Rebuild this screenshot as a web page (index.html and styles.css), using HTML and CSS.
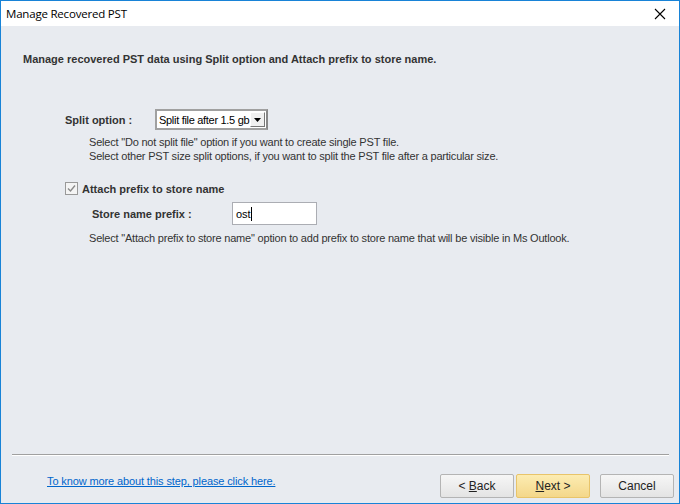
FILE: index.html
```html
<!DOCTYPE html>
<html lang="en">
<head>
    <meta charset="UTF-8">
    <title>Manage Recovered PST</title>
    <link rel="stylesheet" href="styles.css">
</head>
<body>
    <div class="window">
        <div class="title-bar">
            <span class="title">Manage Recovered PST</span>
            <span class="close">
                <svg width="12" height="12" viewBox="0 0 12 12"><path d="M1 1 L11 11 M11 1 L1 11" stroke="#000" stroke-width="1.1"/></svg>
            </span>
        </div>

        <div class="content">
            <h1 class="heading">Manage recovered PST data using Split option and Attach prefix to store name.</h1>

            <div class="split-row">
                <span class="label">Split option :</span>
                <div class="combo">
                    <span class="combo-text">Split file after 1.5 gb</span>
                    <span class="combo-btn">
                        <svg width="7" height="4" viewBox="0 0 7 4"><path d="M0 0 H7 L3.5 4 Z" fill="#000"/></svg>
                    </span>
                </div>
            </div>
            <p class="hint split-hint">Select "Do not split file" option if you want to create single PST file.<br>Select other PST size split options, if you want to split the PST file after a particular size.</p>

            <div class="check-row">
                <span class="checkbox">
                    <svg width="9" height="9" viewBox="0 0 9 9"><path d="M1 4.5 L3.5 7 L8 1.5" stroke="#8a8a8a" stroke-width="1.4" fill="none"/></svg>
                </span>
                <span class="label">Attach prefix to store name</span>
            </div>
            <div class="prefix-row">
                <span class="label">Store name prefix :</span>
                <div class="text-input">ost<span class="caret"></span></div>
            </div>
            <p class="hint prefix-hint">Select "Attach prefix to store name" option to add prefix to store name that will be visible in Ms Outlook.</p>
        </div>

        <div class="footer">
            <div class="separator"></div>
            <div class="footer-row">
                <a class="help-link" href="#">To know more about this step, please click here.</a>
                <div class="buttons">
                    <button class="btn">&lt; <u>B</u>ack</button>
                    <button class="btn btn-next"><u>N</u>ext &gt;</button>
                    <button class="btn btn-cancel">Cancel</button>
                </div>
            </div>
        </div>
    </div>
</body>
</html>
```

FILE: styles.css
```css
/* General Styles */
body {
    margin: 0;
    font-family: 'Liberation Sans', Arial, sans-serif;
    font-size: 11px;
    color: #333;
}

.window {
    width: 680px;
    height: 504px;
    box-sizing: border-box;
    border: 1px solid #1883d7;
    background-color: #e8ebf0;
    display: flex;
    flex-direction: column;
}

/* Title Bar */
.title-bar {
    height: 25px;
    background-color: #fff;
    display: flex;
    align-items: center;
    justify-content: space-between;
    padding: 0 13px 0 5px;
}

.title {
    font-family: 'Open Sans', 'Noto Sans', sans-serif;
    font-size: 11.5px;
    letter-spacing: -0.2px;
    color: #000;
}

.close {
    display: flex;
}

/* Content */
.content {
    flex: 1;
    padding: 27px 0 0 22px;
}

.heading {
    margin: 0;
    font-size: 11px;
    font-weight: bold;
    color: #333;
}

.label {
    font-weight: bold;
    color: #333;
}

.split-row {
    display: flex;
    align-items: center;
    margin: 44px 0 0 42px;
}

.split-row .label {
    width: 90px;
}

.combo {
    width: 109px;
    height: 17px;
    border: 2px solid #a0a0a0;
    border-right-color: #888;
    background-color: #fff;
    display: flex;
    align-items: center;
    color: #000;
    font-size: 11px;
}

.combo-text {
    flex: 1;
    padding-left: 2px;
    letter-spacing: -0.3px;
    white-space: nowrap;
    overflow: hidden;
}

.combo-btn {
    width: 15px;
    height: 15px;
    margin-right: 1px;
    background-color: #f0f0f0;
    border: 1px solid #fff;
    border-right-color: #777;
    border-bottom-color: #777;
    box-sizing: border-box;
    display: flex;
    align-items: center;
    justify-content: center;
}

.hint {
    margin: 0;
    line-height: 14px;
    letter-spacing: -0.2px;
    color: #333;
}

.split-hint {
    margin: 5px 0 0 66px;
}

.check-row {
    display: flex;
    align-items: center;
    margin: 19px 0 0 42px;
}

.checkbox {
    width: 11px;
    height: 11px;
    border: 1px solid #999;
    background-color: #f4f4f4;
    display: flex;
    align-items: center;
    justify-content: center;
    margin-right: 4px;
}

.prefix-row {
    display: flex;
    align-items: center;
    margin: 7px 0 0 69px;
}

.prefix-row .label {
    width: 140px;
}

.text-input {
    width: 80px;
    height: 21px;
    border: 1px solid #abadb3;
    background-color: #fff;
    color: #000;
    display: flex;
    align-items: center;
    padding-left: 3px;
    font-size: 11px;
}

.caret {
    width: 1px;
    height: 14px;
    background-color: #000;
}

.prefix-hint {
    margin: 6px 0 0 66px;
}

/* Footer */
.footer {
    padding: 0 10px 5px 11px;
}

.separator {
    border-top: 1px solid #a0a0a0;
    border-bottom: 1px solid #fff;
}

.footer-row {
    display: flex;
    align-items: flex-start;
    justify-content: space-between;
    margin-top: 18px;
    padding-left: 35px;
}

.help-link {
    color: #0066cc;
    font-size: 11px;
    letter-spacing: -0.12px;
    margin-top: 1px;
}

.buttons {
    display: flex;
    margin-right: -5px;
}

.btn {
    width: 74px;
    height: 24px;
    font-family: 'Liberation Sans', Arial, sans-serif;
    font-size: 12px;
    color: #222;
    border: 1px solid #b4b4b4;
    border-radius: 2px;
    background: linear-gradient(#f6f6f6, #e4e4e4);
    margin: 0;
}

.btn-next {
    margin-left: 2px;
    border-color: #e8c46a;
    background: linear-gradient(#fcecb2, #f4d78a);
}

.btn-cancel {
    margin-left: 10px;
}
```
